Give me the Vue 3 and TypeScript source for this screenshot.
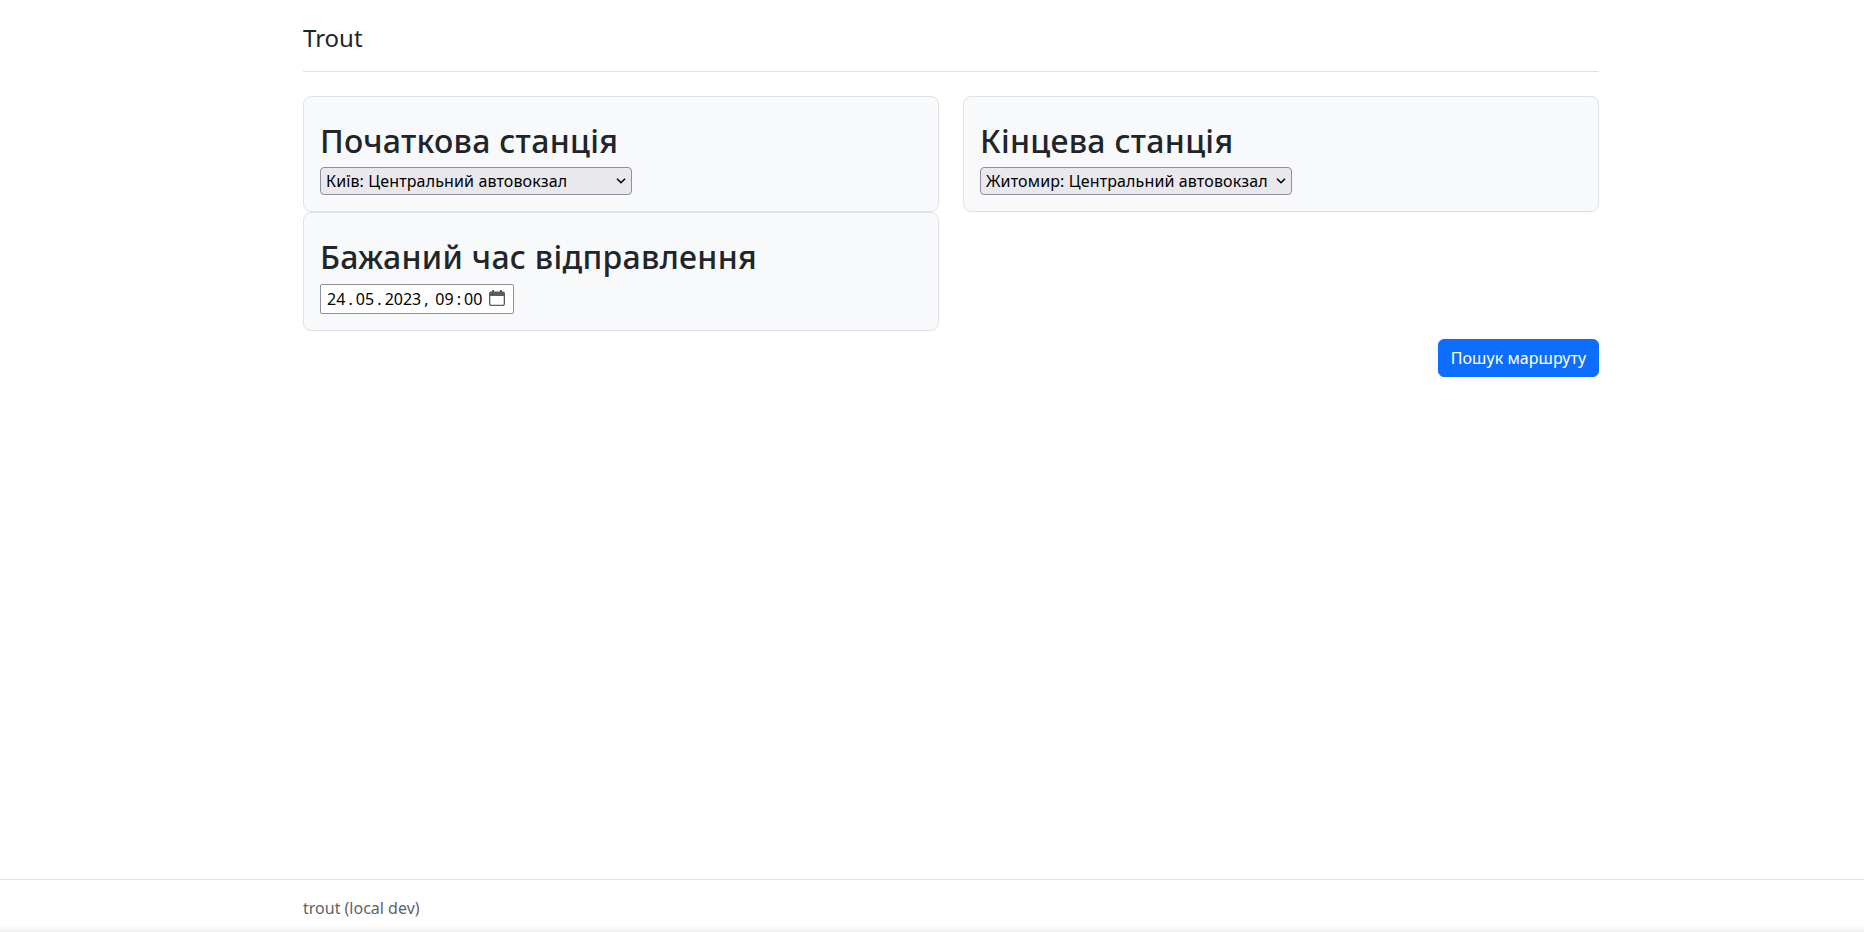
<script setup lang="ts">
interface StationField {
  title: string
  value: string
}

const stations: StationField[] = [
  { title: 'Початкова станція', value: 'Київ: Центральний автовокзал' },
  { title: 'Кінцева станція', value: 'Житомир: Центральний автовокзал' },
]
</script>

<template>
  <div class="page">
    <header class="container">
      <div class="header-bar"><span class="brand">Trout</span></div>
    </header>
    <main class="container">
      <div class="grid">
        <section v-for="s in stations" :key="s.title" class="card">
          <h2>{{ s.title }}</h2>
          <div class="select" role="combobox">
            <span>{{ s.value }}</span>
            <svg width="10" height="8" viewBox="0 0 10 8" fill="none" stroke="#000" stroke-width="1.6">
              <path d="M1 1.8 5 5.7 9 1.8" />
            </svg>
          </div>
        </section>
        <section class="card">
          <h2>Бажаний час відправлення</h2>
          <div class="datetime">
            <span>24</span><span class="sep">.</span><span>05</span><span class="sep">.</span><span>2023</span><span class="sep comma">,</span><span>09</span><span class="sep">:</span><span>00</span>
            <svg width="16" height="16" viewBox="0 0 16 16">
              <path
                fill="#5b5b5b"
                fill-rule="evenodd"
                d="M3 0h2v1.5h6V0h2v1.5h1a2 2 0 0 1 2 2V14a2 2 0 0 1-2 2H2a2 2 0 0 1-2-2V3.500a2 2 0 0 1 2-2h1zM1.300 6v7.900a.8.8 0 0 0 .8.8h11.800a.8.8 0 0 0 .8-.8V6z"
              />
            </svg>
          </div>
        </section>
      </div>
      <div class="actions"><button type="button">Пошук маршруту</button></div>
    </main>
    <footer>
      <div class="container">trout (local dev)</div>
    </footer>
  </div>
</template>

<style>
body {
  margin: 0;
  background: #fff;
}
</style>

<style scoped>
.page {
  display: flex;
  flex-direction: column;
  height: 932px;
  overflow: hidden;
  color: #212529;
  font: 16px/1.5 'Noto Sans', 'Liberation Sans', sans-serif;
}
.page * {
  box-sizing: border-box;
}
.container {
  width: 1296px;
  margin-left: 303px;
}
.header-bar {
  display: flex;
  align-items: center;
  height: 72px;
  margin-bottom: 24px;
  padding-top: 5px;
  border-bottom: 1px solid #dee2e6;
}
.brand {
  font-size: 24px;
  line-height: 36px;
}
main {
  flex: 1;
}
.grid {
  display: grid;
  grid-template-columns: 1fr 1fr;
  column-gap: 24px;
}
.card {
  padding: 25px 16px 16px;
  border: 1px solid #dee2e6;
  border-radius: 8px;
  background: #f8f9fa;
}
h2 {
  margin: 0 0 7px;
  font-size: 32px;
  line-height: 38.4px;
  font-weight: 500;
  letter-spacing: 0.29px;
}
.select {
  display: flex;
  align-items: center;
  justify-content: space-between;
  width: 312px;
  height: 28px;
  padding: 0 5px;
  border: 1px solid #8f8f9d;
  border-radius: 4px;
  background: #e9e9ed;
  color: #000;
  line-height: 22px;
  letter-spacing: 0.13px;
}
.datetime {
  display: flex;
  align-items: center;
  width: 194px;
  height: 30px;
  padding-left: 6px;
  border: 1px solid #8f8f9d;
  border-radius: 2px;
  background: #fff;
  color: #000;
  line-height: 22px;
}
.datetime svg {
  margin: -2px 0 0 7px;
}
.sep {
  width: 10.5px;
  text-align: center;
}
.comma {
  width: 14px;
  padding-left: 3px;
  text-align: left;
}
.actions {
  display: flex;
  justify-content: flex-end;
  margin-top: 8px;
}
button {
  width: 161px;
  height: 38px;
  padding: 6px 0;
  border: 1px solid #0d6efd;
  border-radius: 6px;
  background: #0d6efd;
  color: #fff;
  font: inherit;
  letter-spacing: 0.07px;
}
footer {
  height: 53px;
  padding-top: 16px;
  border-top: 1px solid #dee2e6;
  background: linear-gradient(to top, #efefef, #fff 7px);
  color: #5c636a;
}
</style>
